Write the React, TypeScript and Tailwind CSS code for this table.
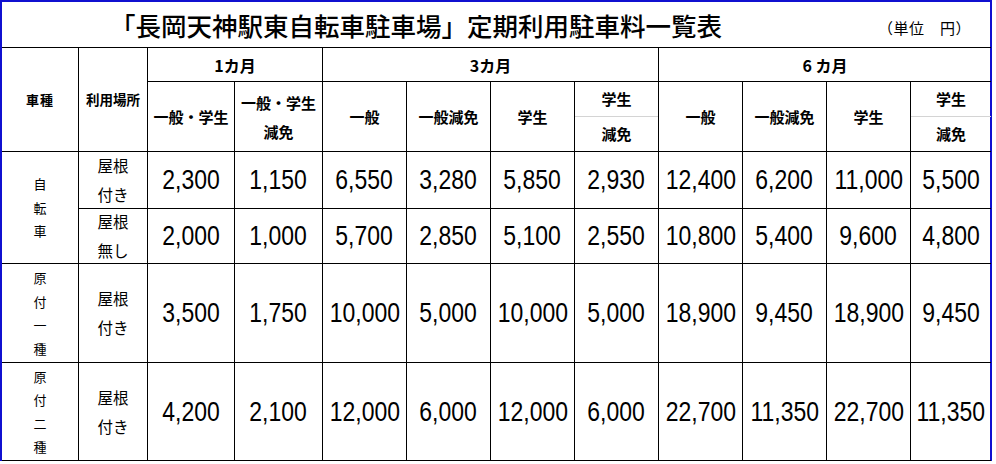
import React from 'react';

const JP = '"Noto Sans CJK JP", "Noto Sans", sans-serif';
const NUM = '"Liberation Sans", Arial, sans-serif';

const cell = 'border-r border-b border-black flex items-center justify-center bg-white';

const subHeads: { top: string; bottom?: string; split?: boolean }[] = [
  { top: '一般・学生' },
  { top: '一般・学生', bottom: '減免' },
  { top: '一般' },
  { top: '一般減免' },
  { top: '学生' },
  { top: '学生', bottom: '減免', split: true },
  { top: '一般' },
  { top: '一般減免' },
  { top: '学生' },
  { top: '学生', bottom: '減免', split: true },
];

const groups = [
  {
    kind: ['自', '転', '車'],
    rows: [
      { place: ['屋根', '付き'], values: ['2,300', '1,150', '6,550', '3,280', '5,850', '2,930', '12,400', '6,200', '11,000', '5,500'] },
      { place: ['屋根', '無し'], values: ['2,000', '1,000', '5,700', '2,850', '5,100', '2,550', '10,800', '5,400', '9,600', '4,800'] },
    ],
  },
  {
    kind: ['原', '付', '一', '種'],
    rows: [
      { place: ['屋根', '付き'], values: ['3,500', '1,750', '10,000', '5,000', '10,000', '5,000', '18,900', '9,450', '18,900', '9,450'] },
    ],
  },
  {
    kind: ['原', '付', '二', '種'],
    rows: [
      { place: ['屋根', '付き'], values: ['4,200', '2,100', '12,000', '6,000', '12,000', '6,000', '22,700', '11,350', '22,700', '11,350'] },
    ],
  },
];

export default function App() {
  return (
    <div className="w-[996px] h-[464px] bg-white" style={{ fontFamily: JP }}>
      <div className="w-[992px] border-t-2 border-l-2 border-r-2 border-[#1010d0] grid grid-cols-[77px_69px_87px_88px_84px_84px_84px_84px_84px_84px_84px_80px] grid-rows-[46px_34px_70px_57px_55px_99px_98px] text-black">
        {/* title */}
        <div className="col-span-12 border-b border-black flex items-center pl-[108px] pr-[20px]">
          <span className="text-[25.5px] font-medium leading-none">「長岡天神駅東自転車駐車場」定期利用駐車料一覧表</span>
          <span className="ml-auto mt-[6px] text-[15px] leading-none tracking-[0.5px]">（単位　円）</span>
        </div>

        {/* header row 1 */}
        <div className={`${cell} row-span-2 text-[13px] font-bold tracking-[1px]`}>車種</div>
        <div className={`${cell} row-span-2 text-[13.5px] font-bold`}>利用場所</div>
        <div className={`${cell} col-span-2 text-[16px] font-bold`}>1カ月</div>
        <div className={`${cell} col-span-4 text-[16px] font-bold`}>3カ月</div>
        <div className="col-span-4 border-b border-black flex items-center justify-center text-[16px] font-bold">6 カ月</div>

        {/* header row 2 */}
        {subHeads.map((h, i) => {
          const last = i === subHeads.length - 1;
          const border = last ? 'border-b border-black' : 'border-r border-b border-black';
          if (h.split) {
            return (
              <div key={i} className={`${border} flex flex-col text-[15px] font-bold`}>
                <div className="flex-1 flex items-center justify-center border-b border-[#d4d4d4]">{h.top}</div>
                <div className="flex-1 flex items-center justify-center">{h.bottom}</div>
              </div>
            );
          }
          return (
            <div key={i} className={`${border} flex flex-col items-center justify-center text-[15px] font-bold leading-[29px]`}>
              <span>{h.top}</span>
              {h.bottom && <span>{h.bottom}</span>}
            </div>
          );
        })}

        {/* data */}
        {groups.map((g, gi) => (
          <React.Fragment key={gi}>
            {g.rows.map((r, ri) => (
              <React.Fragment key={ri}>
                {ri === 0 && (
                  <div className={`${cell} flex-col text-[13px] leading-[23.5px] ${g.rows.length === 2 ? 'row-span-2' : ''}`}>
                    {g.kind.map((k, ki) => (
                      <span key={ki}>{k}</span>
                    ))}
                  </div>
                )}
                <div className={`${cell} flex-col text-[15.5px] leading-[29px]`}>
                  <span>{r.place[0]}</span>
                  <span>{r.place[1]}</span>
                </div>
                {r.values.map((v, vi) => (
                  <div
                    key={vi}
                    className={`${vi === r.values.length - 1 ? 'border-b border-black flex items-center justify-center' : cell} text-[28px] leading-none`}
                    style={{ fontFamily: NUM }}
                  >
                    <span className="inline-block scale-x-[0.82]">{v}</span>
                  </div>
                ))}
              </React.Fragment>
            ))}
          </React.Fragment>
        ))}
      </div>
    </div>
  );
}
